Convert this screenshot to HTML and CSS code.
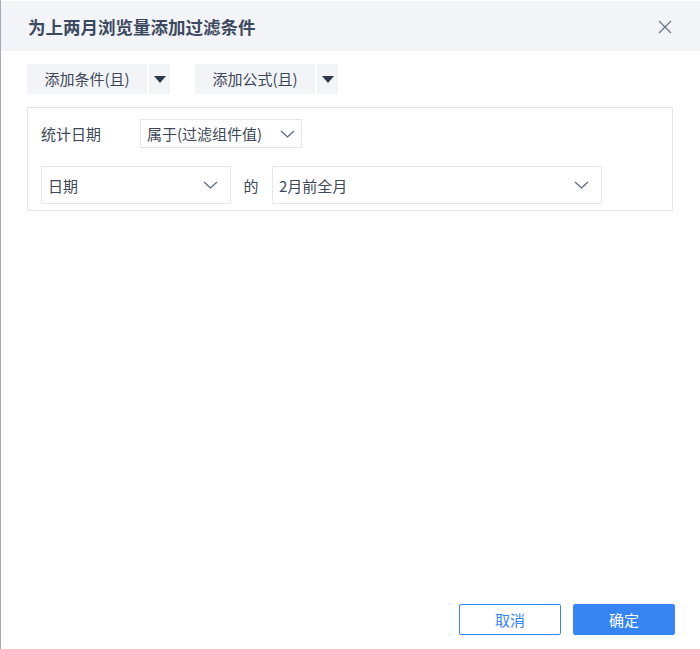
FILE: index.html
```html
<!DOCTYPE html>
<html lang="zh">
<head>
<meta charset="utf-8">
<link rel="stylesheet" href="styles.css">
</head>
<body>
<div class="dialog">
  <div class="header">
    <div class="title">为上两月浏览量添加过滤条件</div>
    <svg class="close" width="14" height="14" viewBox="0 0 14 14"><path d="M1 1L13 13M13 1L1 13" stroke="#6b7789" stroke-width="1.3" fill="none"/></svg>
  </div>
  <div class="toolbar">
    <div class="btngroup">
      <div class="btn-main">添加条件(且)</div>
      <div class="btn-arrow"><span class="tri"></span></div>
    </div>
    <div class="btngroup">
      <div class="btn-main">添加公式(且)</div>
      <div class="btn-arrow"><span class="tri"></span></div>
    </div>
  </div>
  <div class="panel">
    <div class="row1">
      <div class="label">统计日期</div>
      <div class="select sel-op">
        <span>属于(过滤组件值)</span>
        <svg class="chev" width="15" height="8" viewBox="0 0 15 8"><path d="M1 1L7.5 7L14 1" stroke="#5a6678" stroke-width="1.2" fill="none"/></svg>
      </div>
    </div>
    <div class="row2">
      <div class="select sel-a">
        <span>日期</span>
        <svg class="chev" width="15" height="8" viewBox="0 0 15 8"><path d="M1 1L7.5 7L14 1" stroke="#5a6678" stroke-width="1.2" fill="none"/></svg>
      </div>
      <div class="de">的</div>
      <div class="select sel-b">
        <span>2月前全月</span>
        <svg class="chev" width="15" height="8" viewBox="0 0 15 8"><path d="M1 1L7.5 7L14 1" stroke="#5a6678" stroke-width="1.2" fill="none"/></svg>
      </div>
    </div>
  </div>
  <div class="spacer"></div>
  <div class="footer">
    <div class="btn btn-cancel">取消</div>
    <div class="btn btn-ok">确定</div>
  </div>
</div>
</body>
</html>
```
FILE: styles.css
```css
* { box-sizing: border-box; }
html, body { margin: 0; padding: 0; }
body {
  width: 700px;
  height: 649px;
  background: #fff;
  font-family: "Noto Sans CJK SC", "Noto Sans", sans-serif;
  color: #3d4757;
  overflow: hidden;
}
.dialog {
  width: 700px;
  height: 649px;
  display: flex;
  flex-direction: column;
  border-left: 1px solid #a4abb6;
}
.header {
  height: 50px;
  margin-top: 1px;
  background: #f2f4f7;
  display: flex;
  align-items: center;
  justify-content: space-between;
  padding: 0 28px 0 27px;
  flex-shrink: 0;
}
.title {
  font-size: 17.5px;
  font-weight: bold;
  color: #3c4960;
}
.close { margin-top: 1px; }
.toolbar {
  display: flex;
  gap: 25px;
  margin-top: 13px;
  padding-left: 26px;
}
.btngroup { display: flex; gap: 2px; }
.btn-main {
  width: 120px;
  height: 30px;
  background: #f2f4f7;
  font-size: 15px;
  line-height: 30px;
  text-align: center;
  color: #3d4757;
}
.btn-arrow {
  width: 21px;
  height: 30px;
  background: #f2f4f7;
  display: flex;
  align-items: center;
  justify-content: center;
}
.tri {
  width: 0; height: 0;
  border-left: 6px solid transparent;
  border-right: 6px solid transparent;
  border-top: 7px solid #2f3a4c;
}
.panel {
  margin: 13px 27px 0 26px;
  height: 104px;
  border: 1px solid #e3e6eb;
  padding: 11px 0 0 13px;
}
.row1 { display: flex; align-items: center; height: 29px; }
.label { width: 99px; font-size: 15px; color: #3d4757; }
.select {
  border: 1px solid #e3e6eb;
  display: flex;
  align-items: center;
  justify-content: space-between;
  font-size: 15px;
  color: #3d4757;
  background: #fff;
}
.sel-op { width: 162px; height: 29px; padding: 0 6px 0 6px; }
.row2 { display: flex; align-items: center; margin-top: 18px; }
.sel-a { width: 190px; height: 38px; padding: 0 12px 0 6px; }
.de { width: 41px; text-align: center; font-size: 15px; padding-right: 1px; }
.sel-b { width: 330px; height: 38px; padding: 0 12px 0 6px; }
.spacer { flex: 1; }
.footer {
  display: flex;
  justify-content: flex-end;
  gap: 12px;
  padding: 0 25px 14px 0;
}
.btn {
  width: 102px;
  height: 31px;
  font-size: 15px;
  line-height: 29px;
  text-align: center;
  border-radius: 2px;
}
.btn-cancel { border: 1px solid #3685f2; color: #3685f2; background: #fff; }
.btn-ok { border: 1px solid #3685f2; background: #3685f2; color: #fff; }
```
